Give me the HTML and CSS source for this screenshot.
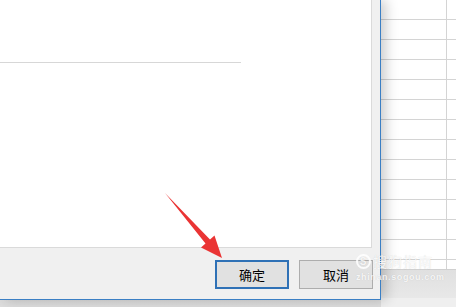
FILE: index.html
```html
<!DOCTYPE html>
<html lang="zh-CN">
<head>
    <meta charset="UTF-8">
    <meta name="viewport" content="width=device-width, initial-scale=1.0">
    <title>确定</title>
    <link rel="stylesheet" href="styles.css">
</head>
<body>
    <div class="screen">
        <div class="dialog">
            <div class="content">
                <div class="rule"></div>
            </div>
            <div class="footer">
                <button type="button" class="btn primary">确定</button>
                <button type="button" class="btn">取消</button>
            </div>
        </div>

        <div class="sheet">
            <div class="grid"></div>
            <div class="tabs"></div>
            <div class="status"></div>
        </div>

        <!-- red pointer drawn over the dialog -->
        <svg class="arrow" width="456" height="307" viewBox="0 0 456 307">
            <polygon points="165,193 210,239.5 214.5,235.5 222,258 201,247.5 205.5,243.5" fill="#ea3434"/>
        </svg>

        <div class="watermark">
            <div class="mark-top"><span class="mark-logo">S</span>搜狗指南</div>
            <div class="mark-url">zhinan.sogou.com</div>
        </div>
    </div>
</body>
</html>
```

FILE: styles.css
```css
* {
    box-sizing: border-box;
}

body {
    margin: 0;
}

.screen {
    display: flex;
    position: relative;
    width: 456px;
    height: 307px;
    overflow: hidden;
    background: linear-gradient(#cfcfcf, #dddddd);
    font-family: "Noto Sans CJK SC", sans-serif;
}

.dialog {
    position: relative;
    z-index: 1;
    flex: none;
    width: 381px;
    height: 300px;
    display: flex;
    flex-direction: column;
    background-color: #f0f0f0;
    border-right: 1px solid #3b7fc4;
    border-bottom: 1px solid #3b7fc4;
    box-shadow: 5px 0 12px rgba(0, 0, 0, 0.2);
}

.content {
    height: 248px;
    margin-right: 8px;
    padding-top: 62px;
    background-color: #fff;
    border-right: 1px solid #dadada;
    border-bottom: 1px solid #dadada;
}

.rule {
    width: 241px;
    height: 1px;
    background-color: #d7d7d7;
}

.footer {
    flex: 1;
    display: flex;
    justify-content: flex-end;
    align-items: flex-start;
    gap: 10px;
    padding: 12px 7px 0 0;
}

.btn {
    width: 74px;
    height: 29px;
    padding: 0;
    border: 1px solid #adadad;
    background-color: #e1e1e1;
    color: #000;
    font-family: "Noto Sans CJK SC", sans-serif;
    font-size: 13px;
    line-height: 1;
}

.btn.primary {
    border: 2px solid #2f71b6;
}

.sheet {
    flex: 1;
    display: flex;
    flex-direction: column;
    height: 307px;
}

.grid {
    height: 270px;
    background:
        linear-gradient(to right, transparent 65px, #d4d4d4 65px, #d4d4d4 66px, transparent 66px),
        repeating-linear-gradient(to bottom, #fff 0, #fff 19px, #d4d4d4 19px, #d4d4d4 20px);
    border-bottom: 1px solid #d0d0d0;
}

.tabs {
    height: 28px;
    background: linear-gradient(#e0e0e0, #e8e8e8);
}

.status {
    flex: 1;
    background-color: #efefef;
}

.arrow {
    position: absolute;
    top: 0;
    left: 0;
    z-index: 2;
    pointer-events: none;
}

/* faint site watermark, bottom right */
.watermark {
    position: absolute;
    left: 356px;
    top: 253px;
    z-index: 2;
    color: rgba(255, 255, 255, 0.85);
    text-shadow: 0 0 1px rgba(0, 0, 0, 0.16);
    pointer-events: none;
}

.mark-top {
    display: flex;
    align-items: center;
    gap: 2px;
    font-size: 14px;
    line-height: 16px;
    letter-spacing: 1px;
}

.mark-logo {
    width: 15px;
    height: 15px;
    border: 2px solid rgba(255, 255, 255, 0.85);
    border-radius: 50%;
    font-family: "Liberation Sans", sans-serif;
    font-size: 10px;
    font-weight: bold;
    line-height: 11px;
    text-align: center;
}

.mark-url {
    margin-top: 3px;
    font-family: "Liberation Sans", sans-serif;
    font-size: 9px;
    font-weight: bold;
    letter-spacing: 0.6px;
}
```
